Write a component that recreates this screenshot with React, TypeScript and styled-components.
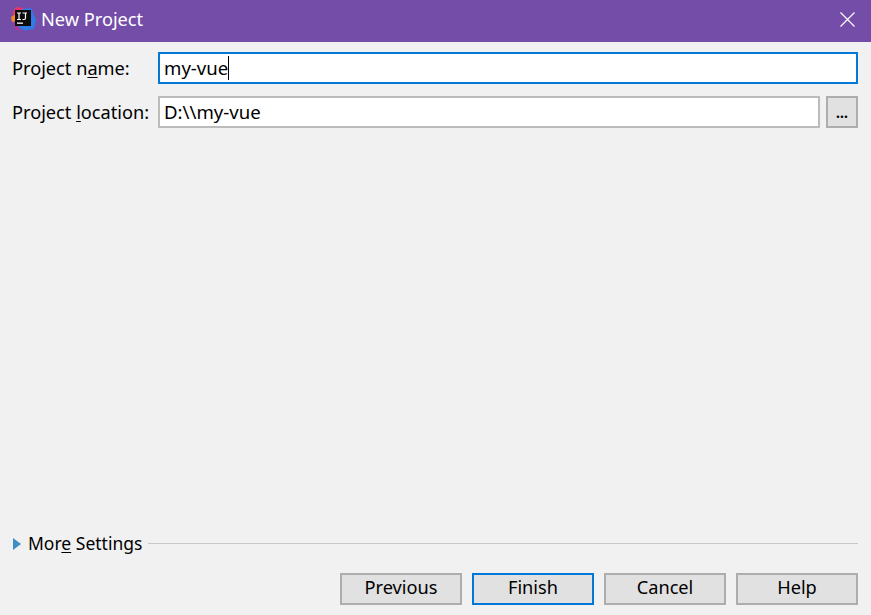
import React from "react";
import styled, { createGlobalStyle } from "styled-components";

const Global = createGlobalStyle`
  html, body { margin: 0; padding: 0; background: #f1f1f1; }
  * { box-sizing: border-box; }
`;

const Dialog = styled.div`
  width: 871px;
  height: 615px;
  display: flex;
  flex-direction: column;
  background: #f1f1f1;
  color: #000;
  font-family: "Noto Sans", "Open Sans", sans-serif;
  font-size: 18.2px;
  overflow: hidden;
`;

const TitleBar = styled.div`
  height: 42px;
  flex: none;
  display: flex;
  align-items: center;
  padding: 0 16px 0 10px;
  background: #744da9;
  color: #fff;
`;

const LogoMark = styled.svg`
  flex: none;
  width: 26px;
  height: 26px;
  margin-top: -4px;
`;

const TitleText = styled.span`
  margin-left: 5px;
  flex: 1;
  font-size: 18.2px;
  line-height: 38px;
  margin-top: -5px;
`;

const CloseGlyph = styled.svg`
  flex: none;
  width: 15px;
  height: 15px;
  margin-top: -3px;
`;

const Content = styled.div`
  flex: 1;
  display: flex;
  flex-direction: column;
  padding: 10px 13px 10px 12px;
`;

const Row = styled.div`
  display: flex;
  align-items: center;
  height: 32px;
  margin-bottom: 12px;
`;

const Label = styled.label`
  width: 146px;
  flex: none;
  line-height: 24px;
  white-space: nowrap;
`;

const Field = styled.div<{ $focused?: boolean }>`
  flex: 1;
  height: 32px;
  display: flex;
  align-items: center;
  padding: 0 4px;
  background: #fff;
  border: 2px solid ${(p) => (p.$focused ? "#0078d7" : "#bcbcbc")};
  font-size: 18.6px;
  line-height: 24px;
`;

const Caret = styled.span`
  display: inline-block;
  width: 1px;
  height: 24px;
  background: #000;
`;

const BrowseButton = styled.button`
  width: 32px;
  height: 32px;
  margin-left: 6px;
  padding: 0;
  flex: none;
  background: #e1e1e1;
  border: 2px solid #adadad;
  font: inherit;
  font-size: 14px;
  font-weight: 700;
  line-height: 30px;
  color: #000;
`;

const Spacer = styled.div`
  flex: 1;
`;

const MoreRow = styled.div`
  display: flex;
  align-items: center;
  height: 24px;
  margin-bottom: 17px;
`;

const Arrow = styled.svg`
  flex: none;
  width: 8px;
  height: 12px;
  margin: -1px 7px 0 1px;
`;

const MoreLabel = styled.span`
  font-size: 17.5px;
  margin-top: -2px;
`;

const Rule = styled.div`
  flex: 1;
  height: 1px;
  margin-left: 6px;
  margin-top: -2px;
  background: #c8c8c8;
`;

const ButtonBar = styled.div`
  display: flex;
  justify-content: flex-end;
  gap: 10px;
`;

const ActionButton = styled.button<{ $primary?: boolean }>`
  width: 122px;
  height: 32px;
  padding: 0 0 5px;
  background: #e1e1e1;
  border: 2px solid ${(p) => (p.$primary ? "#0078d7" : "#adadad")};
  font: inherit;
  line-height: 24px;
  color: #000;
`;

const U = styled.span`
  text-decoration: underline;
  text-underline-offset: 2px;
`;

const Logo = () => (
  <LogoMark viewBox="0 0 26 26">
    <path d="M2.5 6 L6 1 L14 2 L12 10 L7 21 L3.5 14 Z" fill="#e8336b" />
    <path d="M1 11 L5 8.5 L6 15 L2 16 Z" fill="#f28a2a" />
    <path d="M12 3 L21 2 L26 14 L24 23 L15 24.5 L9 22 Z" fill="#2f7be8" />
    <path d="M3.5 16 L8 23 L14 24.5 L6 24 Z" fill="#c72f8f" />
    <rect x="5" y="4" width="16" height="16" fill="#0c0c0c" />
    <rect x="7" y="16.5" width="6" height="1.3" fill="#fff" />
    <path d="M7 7 H11 M9 7 V13.5 M7 13.5 H11 M12.5 7 H17 M15.5 7 V12 Q15.5 13.5 14 13.5 H12.5" stroke="#fff" strokeWidth="1.2" fill="none" />
  </LogoMark>
);

const CloseIcon = () => (
  <CloseGlyph viewBox="0 0 15 15">
    <path d="M0.5 0.5 L14.5 14.5 M14.5 0.5 L0.5 14.5" stroke="#fff" strokeWidth="1.2" fill="none" />
  </CloseGlyph>
);

export default function App() {
  return (
    <Dialog>
      <Global />
      <TitleBar>
        <Logo />
        <TitleText>New Project</TitleText>
        <CloseIcon />
      </TitleBar>
      <Content>
        <Row>
          <Label>
            Project n<U>a</U>me:
          </Label>
          <Field $focused>
            my-vue
            <Caret />
          </Field>
        </Row>
        <Row>
          <Label>
            Project <U>l</U>ocation:
          </Label>
          <Field>D:\\my-vue</Field>
          <BrowseButton>...</BrowseButton>
        </Row>
        <Spacer />
        <MoreRow>
          <Arrow viewBox="0 0 8 12">
            <path d="M0 0 L8 6 L0 12 Z" fill="#3f8fc4" />
          </Arrow>
          <MoreLabel>
            Mor<U>e</U> Settings
          </MoreLabel>
          <Rule />
        </MoreRow>
        <ButtonBar>
          <ActionButton>Previous</ActionButton>
          <ActionButton $primary>Finish</ActionButton>
          <ActionButton>Cancel</ActionButton>
          <ActionButton>Help</ActionButton>
        </ButtonBar>
      </Content>
    </Dialog>
  );
}
